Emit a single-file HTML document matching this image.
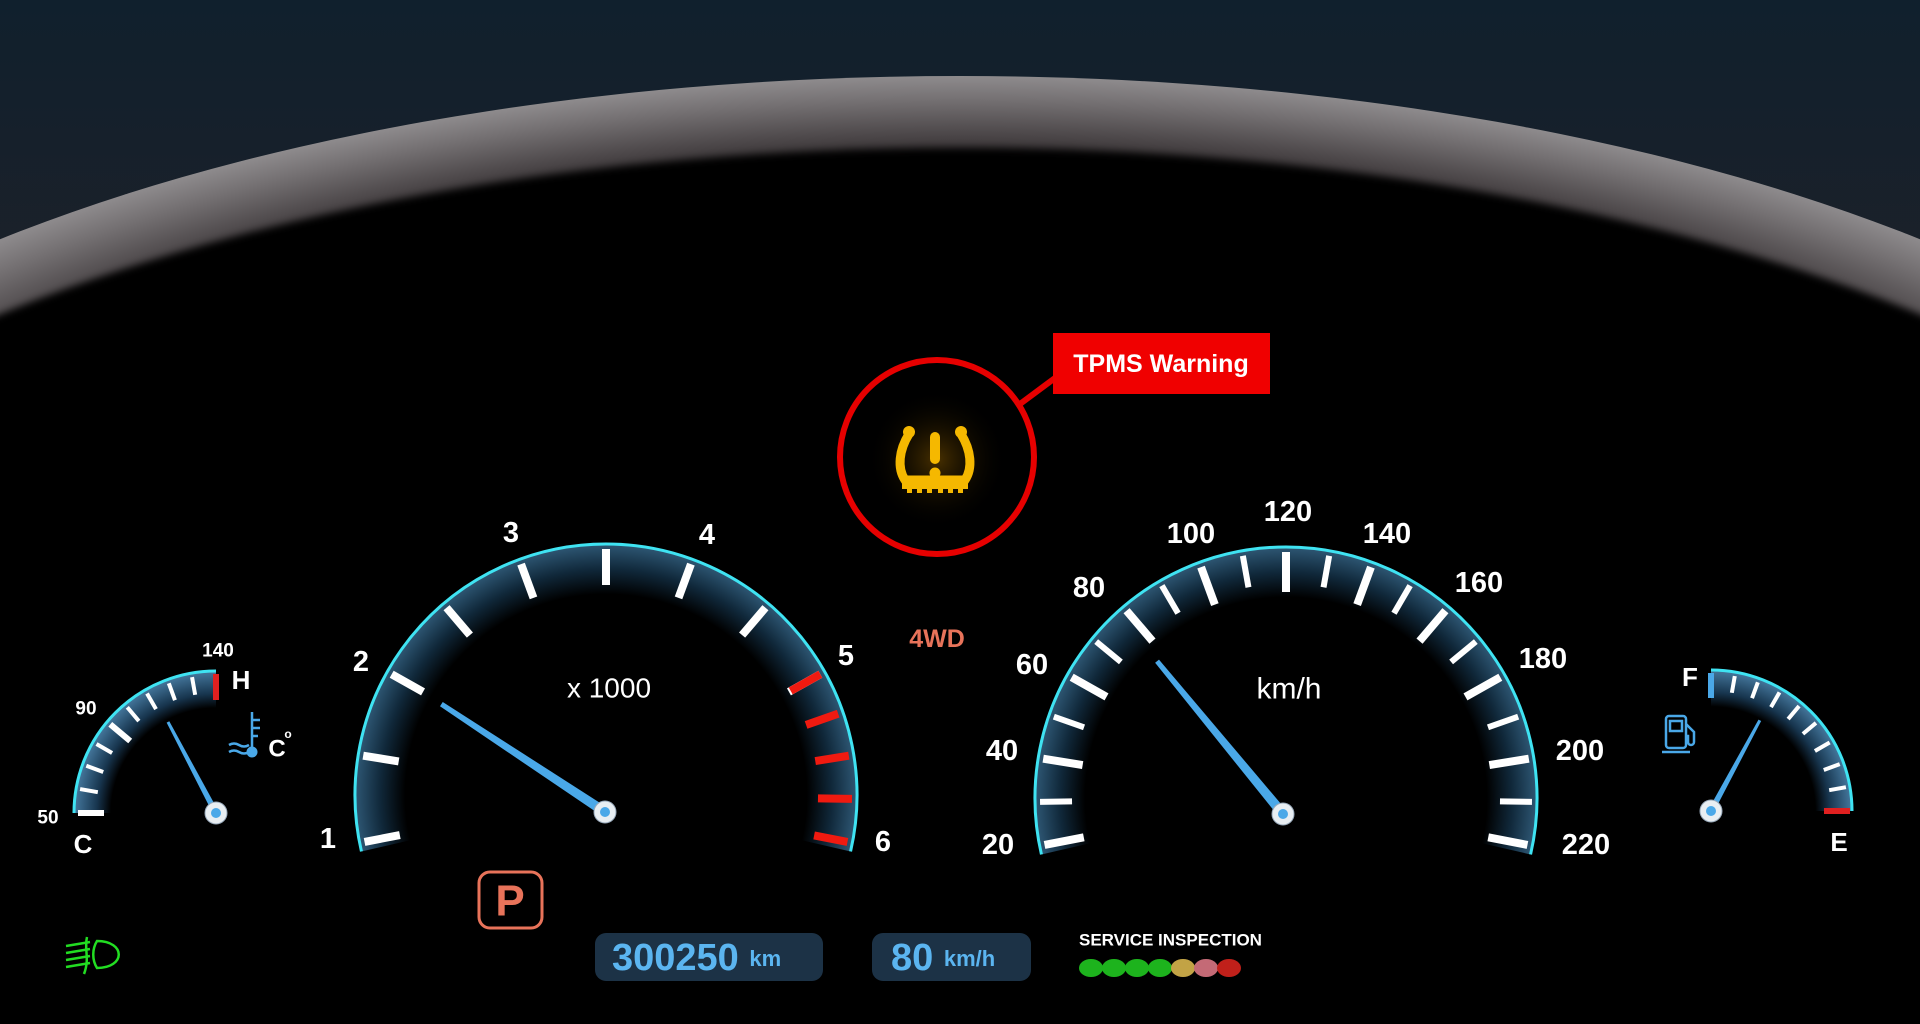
<!DOCTYPE html>
<html><head><meta charset="utf-8">
<style>
html,body{margin:0;padding:0;width:1920px;height:1024px;overflow:hidden;background:#000;}
svg{display:block}
text{font-family:"Liberation Sans Narrow","Liberation Sans",sans-serif;font-weight:bold;fill:#fff;}
</style></head>
<body>
<svg id="s" width="1920" height="1024" viewBox="0 0 1920 1024" xmlns="http://www.w3.org/2000/svg">
<defs>
<linearGradient id="bg" x1="0" y1="0" x2="0" y2="1">
<stop offset="0" stop-color="#10202d"/><stop offset="0.3" stop-color="#1d2129"/><stop offset="0.5" stop-color="#2a2428"/><stop offset="1" stop-color="#2a2428"/>
</linearGradient>
<radialGradient id="lip" cx="0.5" cy="0.5" r="0.5">
<stop offset="0.84" stop-color="#1f1b1c"/><stop offset="0.9" stop-color="#4a4547"/><stop offset="0.96" stop-color="#747072"/><stop offset="1" stop-color="#8e8b8d"/>
</radialGradient>
<filter id="blur6"><feGaussianBlur stdDeviation="4"/></filter>
<radialGradient id="yglow" cx="0.5" cy="0.5" r="0.5">
<stop offset="0" stop-color="#5a3c00" stop-opacity="0.8"/><stop offset="1" stop-color="#000" stop-opacity="0"/>
</radialGradient>
<radialGradient id="bandT" gradientUnits="userSpaceOnUse" cx="606" cy="795" r="251">
<stop offset="0.8" stop-color="#000"/><stop offset="0.9" stop-color="#10283a"/><stop offset="1" stop-color="#2e5774"/>
</radialGradient>
<radialGradient id="bandS" gradientUnits="userSpaceOnUse" cx="1286" cy="798" r="251">
<stop offset="0.8" stop-color="#000"/><stop offset="0.9" stop-color="#10283a"/><stop offset="1" stop-color="#2e5774"/>
</radialGradient>
<radialGradient id="bandC" gradientUnits="userSpaceOnUse" cx="216" cy="813" r="142">
<stop offset="0.74" stop-color="#000"/><stop offset="0.84" stop-color="#17354e"/><stop offset="1" stop-color="#45789e"/>
</radialGradient>
<radialGradient id="bandF" gradientUnits="userSpaceOnUse" cx="1711" cy="811" r="141">
<stop offset="0.74" stop-color="#000"/><stop offset="0.84" stop-color="#17354e"/><stop offset="1" stop-color="#45789e"/>
</radialGradient>
</defs>
<rect width="1920" height="1024" fill="url(#bg)"/>
<ellipse cx="960" cy="676" rx="1400" ry="600" fill="url(#lip)"/>
<ellipse cx="960" cy="770" rx="1410" ry="622" fill="#000" filter="url(#blur6)"/>
<rect x="0" y="420" width="1920" height="604" fill="#000"/>

<g id="gauges"></g>

<g font-size="29" text-anchor="middle" dominant-baseline="central">
<text x="328" y="839">1</text><text x="361" y="662">2</text><text x="511" y="533">3</text>
<text x="707" y="535">4</text><text x="846" y="656">5</text><text x="883" y="842">6</text>
<text x="998" y="845">20</text><text x="1002" y="751">40</text><text x="1032" y="665">60</text>
<text x="1089" y="588">80</text><text x="1191" y="534">100</text><text x="1288" y="512">120</text>
<text x="1387" y="534">140</text><text x="1479" y="583">160</text><text x="1543" y="659">180</text>
<text x="1580" y="751">200</text><text x="1586" y="845">220</text>
</g>
<text x="609" y="688" font-size="28" text-anchor="middle" dominant-baseline="central" style="font-weight:normal;font-family:'Liberation Sans',sans-serif" fill="#e8e8e8">x 1000</text>
<text x="1289" y="689" font-size="30" text-anchor="middle" dominant-baseline="central" style="font-weight:normal;font-family:'Liberation Sans',sans-serif" fill="#e8e8e8">km/h</text>

<g text-anchor="middle" dominant-baseline="central">
<text x="218" y="651" font-size="19">140</text>
<text x="241" y="680" font-size="26">H</text>
<text x="86" y="709" font-size="19">90</text>
<text x="48" y="818" font-size="19">50</text>
<text x="83" y="844" font-size="26">C</text>
<text x="277" y="749" font-size="24">C</text>
<text x="1690" y="677" font-size="26">F</text>
<text x="1839" y="842" font-size="26">E</text>
</g>
<text x="288" y="738" font-size="12" text-anchor="middle">o</text>
<g stroke="#4aa8e8" stroke-width="2.5" fill="none">
<line x1="252" y1="712" x2="252" y2="748"/>
<line x1="252" y1="720" x2="260" y2="720"/><line x1="252" y1="728" x2="260" y2="728"/><line x1="252" y1="736" x2="258" y2="736"/>
<path d="M229 745 q5 -3 10 0 t10 0"/><path d="M229 752 q5 -3 10 0 t10 0"/>
</g>
<circle cx="252" cy="752" r="5.5" fill="#4aa8e8"/>
<g stroke="#4aa8e8" stroke-width="2.5" fill="none">
<rect x="1666" y="716" width="20" height="32" rx="3"/>
<rect x="1670" y="721" width="12" height="10"/>
<line x1="1662" y1="752" x2="1690" y2="752"/>
<path d="M1686 724 l8 8 v10 a3 3 0 0 1 -6 0 v-6 h-2"/>
</g>

<circle cx="937" cy="459" r="70" fill="url(#yglow)"/>
<circle cx="937" cy="457" r="97" fill="none" stroke="#e60000" stroke-width="6"/>
<line x1="1020" y1="404" x2="1055" y2="378" stroke="#e60000" stroke-width="6"/>
<rect x="1053" y="333" width="217" height="61" fill="#f00000"/>
<text x="1161" y="364" font-size="25" text-anchor="middle" dominant-baseline="central" style="font-family:'Liberation Sans',sans-serif">TPMS Warning</text>
<g fill="#f5b800" stroke="#f5b800">
<path d="M909 434 C899 450 897 468 905 480 L965 480 C973 468 971 450 961 434" fill="none" stroke-width="9" stroke-linecap="round"/>
<circle cx="909" cy="432" r="6" stroke="none"/><circle cx="961" cy="432" r="6" stroke="none"/>
<path d="M903 478 L967 478 L967 488 L903 488 Z" stroke-width="2"/>
<rect x="907" y="488" width="5" height="5" stroke="none"/><rect x="917" y="488" width="5" height="5" stroke="none"/><rect x="927" y="488" width="5" height="5" stroke="none"/><rect x="938" y="488" width="5" height="5" stroke="none"/><rect x="948" y="488" width="5" height="5" stroke="none"/><rect x="958" y="488" width="5" height="5" stroke="none"/>
<rect x="930" y="432" width="10" height="32" rx="5" stroke="none"/>
<circle cx="935" cy="473" r="5.5" stroke="none"/>
</g>

<text x="937" y="639" font-size="25" text-anchor="middle" dominant-baseline="central" style="fill:#e8735a">4WD</text>

<rect x="479" y="872" width="63" height="56" rx="11" fill="none" stroke="#e8735a" stroke-width="3"/>
<text x="510" y="901" font-size="44" text-anchor="middle" dominant-baseline="central" style="fill:#e8735a;font-family:'Liberation Sans',sans-serif">P</text>

<rect x="595" y="933" width="228" height="48" rx="11" fill="#1c3246"/>
<text x="612" y="958" font-size="38" dominant-baseline="central" style="fill:#5bb5f0">300250 <tspan font-size="22">km</tspan></text>
<rect x="872" y="933" width="159" height="48" rx="11" fill="#1c3246"/>
<text x="891" y="958" font-size="38" dominant-baseline="central" style="fill:#5bb5f0">80 <tspan font-size="22">km/h</tspan></text>

<text x="1079" y="940" font-size="17" dominant-baseline="central">SERVICE INSPECTION</text>
<g>
<ellipse cx="1091" cy="968" rx="12" ry="9" fill="#1db31d"/>
<ellipse cx="1114" cy="968" rx="12" ry="9" fill="#1db31d"/>
<ellipse cx="1137" cy="968" rx="12" ry="9" fill="#1db31d"/>
<ellipse cx="1160" cy="968" rx="12" ry="9" fill="#1db31d"/>
<ellipse cx="1183" cy="968" rx="12" ry="9" fill="#c2a345"/>
<ellipse cx="1206" cy="968" rx="12" ry="9" fill="#c46a76"/>
<ellipse cx="1229" cy="968" rx="12" ry="9" fill="#c0201a"/>
</g>

<g stroke="#22dd22" stroke-width="2.5" fill="none">
<path d="M97 941 C126 941 126 968 97 968 C92 960 92 949 97 941 Z"/>
<path d="M87 937 C84 950 90 958 84 974"/>
<line x1="66" y1="946" x2="90" y2="942"/><line x1="66" y1="953" x2="90" y2="949"/>
<line x1="66" y1="960" x2="90" y2="956"/><line x1="66" y1="967" x2="90" y2="963"/>
</g>
</svg>
<script>
(function(){
var g=document.getElementById('gauges'),NS='http://www.w3.org/2000/svg';
function el(t,a){var e=document.createElementNS(NS,t);for(var k in a)e.setAttribute(k,a[k]);g.appendChild(e);return e;}
function P(cx,cy,a,r){a=a*Math.PI/180;return [cx+r*Math.cos(a),cy-r*Math.sin(a)];}
function sector(cx,cy,a1,a2,R,r,fill){
 var p1=P(cx,cy,a1,R),p2=P(cx,cy,a2,R),p3=P(cx,cy,a2,r),p4=P(cx,cy,a1,r);
 var large=(a1-a2)>180?1:0;
 el('path',{d:'M'+p1+' A'+R+' '+R+' 0 '+large+' 1 '+p2+' L'+p3+' A'+r+' '+r+' 0 '+large+' 0 '+p4+' Z',fill:fill});
 el('path',{d:'M'+p1+' A'+R+' '+R+' 0 '+large+' 1 '+p2,fill:'none',stroke:'#3fe3f2','stroke-width':3});
}
function tick(cx,cy,a,r1,r2,w,c){var p=P(cx,cy,a,r1),q=P(cx,cy,a,r2);el('line',{x1:p[0],y1:p[1],x2:q[0],y2:q[1],stroke:c,'stroke-width':w});}
function needle(cx,cy,a,len,w){
 var t=P(cx,cy,a,len),n=(a+90)*Math.PI/180,dx=Math.cos(n),dy=-Math.sin(n);
 el('polygon',{points:[cx+dx*w,cy+dy*w,t[0]+dx*w*0.5,t[1]+dy*w*0.5,t[0]-dx*w*0.5,t[1]-dy*w*0.5,cx-dx*w,cy-dy*w].join(' '),fill:'#4aa8e8'});
 el('circle',{cx:cx,cy:cy,r:11,fill:'#e8eef2',stroke:'#9ab','stroke-width':1});
 el('circle',{cx:cx,cy:cy,r:5,fill:'#4aa8e8'});
}
// tach
sector(606,795,193,-13,251,200,'url(#bandT)');
for(var i=0;i<9;i++)tick(606,795,191-20.2*i,246,210,8,'#fff');
for(var i=0;i<5;i++)tick(606,795,29.4-10.1*i,246,212,8,'#f01a10');
needle(605,812,146.6,196,5);
// speed
sector(1286,798,193,-13,251,200,'url(#bandS)');
for(var i=0;i<=20;i++){var maj=i%2==0;tick(1286,798,191-10.1*i,246,maj?206:214,maj?8:6,'#fff');}
needle(1283,814,129.5,198,5);
// temp
sector(216,813,180,90,142,100,'url(#bandC)');
for(var i=0;i<10;i++)tick(216,813,180-10*i,138,i==0||i==4?112:120,i==0||i==4?6:4,'#fff');
tick(216,813,90,139,113,6,'#e02020');
needle(216,813,117.8,103,3);
// fuel
sector(1711,811,90,0,141,100,'url(#bandF)');
tick(1711,811,90,138,113,6,'#4aa8e8');
for(var i=1;i<9;i++)tick(1711,811,90-10*i,137,120,4,'#fff');
tick(1711,811,0,139,113,6,'#e02020');
needle(1711,811,61.7,103,3);
})();
</script>
</body></html>
